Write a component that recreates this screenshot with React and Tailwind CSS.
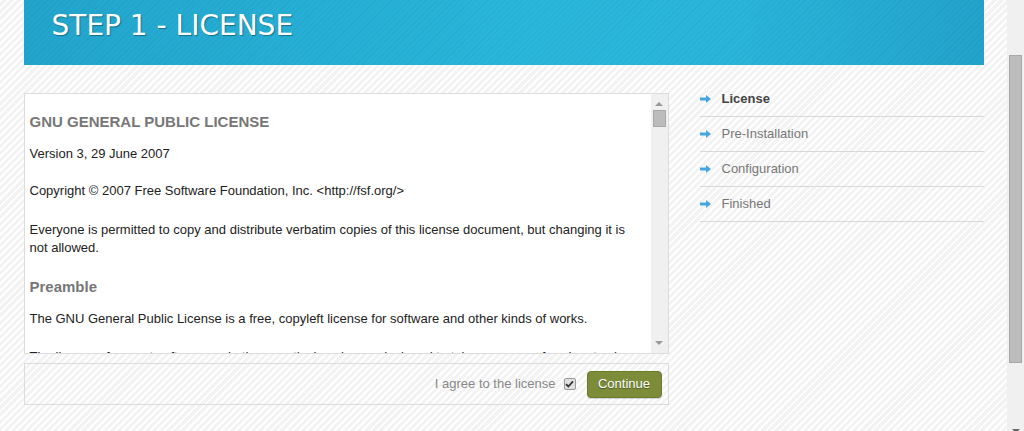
import React from "react";

const Arrow = () => (
  <svg width="11" height="8" viewBox="0 0 11 8" className="shrink-0">
    <path d="M0 2.5 H6 V0 L11 4 L6 8 V5.5 H0 Z" fill="#45a7de" />
  </svg>
);

const steps = [
  { label: "License", active: true },
  { label: "Pre-Installation" },
  { label: "Configuration" },
  { label: "Finished" },
];

export default function App() {
  return (
    <div className="flex h-[431px] w-[1024px] overflow-hidden font-['Liberation_Sans',Arial,sans-serif] text-[13px]">
      <div className="flex-1 bg-[#f6f6f6] bg-[image:repeating-linear-gradient(135deg,#ffffff_0px,#ffffff_2px,#f3f3f3_2px,#f3f3f3_5px)]">
        <div className="mx-auto w-[960px]">
          {/* header */}
          <div className="h-[65px] bg-[#27afd6] bg-[image:repeating-linear-gradient(135deg,rgba(0,0,0,0.035)_0px,rgba(0,0,0,0.035)_1px,transparent_1px,transparent_4px),linear-gradient(90deg,#22a5cc_0%,#2ab6db_55%,#2ab4da_75%,#22a3cb_100%)] pl-[28px] pt-[9px]">
            <h1 className="font-['DejaVu_Sans',Verdana,sans-serif] text-[28px] leading-[34px] text-white [text-shadow:1px_1px_1px_rgba(0,0,0,0.35)]">
              STEP 1 - LICENSE
            </h1>
          </div>

          <div className="flex gap-[31px]">
            {/* left column */}
            <div className="w-[645px] pt-[28px]">
              <div className="flex h-[261px] border border-[#dcdcdc] bg-white">
                <div className="flex-1 overflow-hidden pl-[5px] pr-[10px] text-[#222]">
                  <h2 className="mt-[18px] text-[15px] font-bold leading-[20px] text-[#777]">
                    GNU GENERAL PUBLIC LICENSE
                  </h2>
                  <p className="mt-[13px] leading-[18px]">Version 3, 29 June 2007</p>
                  <p className="mt-[19px] leading-[18px]">
                    Copyright © 2007 Free Software Foundation, Inc. &lt;http://fsf.org/&gt;
                  </p>
                  <p className="mt-[21px] leading-[18px]">
                    Everyone is permitted to copy and distribute verbatim copies of this license document, but changing it is not allowed.
                  </p>
                  <h3 className="mt-[20px] text-[15px] font-bold leading-[20px] text-[#777]">Preamble</h3>
                  <p className="mt-[13px] leading-[18px]">
                    The GNU General Public License is a free, copyleft license for software and other kinds of works.
                  </p>
                  <p className="mt-[20px] leading-[18px]">
                    The licenses for most software and other practical works are designed to take away your freedom to share and change the works. By contrast, the GNU General Public License is intended to guarantee your freedom.
                  </p>
                </div>
                <div className="flex w-[17px] flex-col items-center bg-[#f0f0f0]">
                  <div className="mt-[8px] h-0 w-0 border-x-[4px] border-b-[4px] border-x-transparent border-b-[#999]" />
                  <div className="mt-[4px] h-[17px] w-[13px] border border-[#a8a8a8] bg-[#bcbcbc]" />
                  <div className="flex-1" />
                  <div className="mb-[8px] h-0 w-0 border-x-[4px] border-t-[4px] border-x-transparent border-t-[#999]" />
                </div>
              </div>

              <div className="mt-[9px] flex h-[42px] items-center justify-end border border-[#dcdcdc] pr-[6px]">
                <span className="text-[#888]">I agree to the license</span>
                <span className="ml-[8px] flex h-[12px] w-[12px] items-center justify-center rounded-[2px] border border-[#999] bg-[#e0e0e0]">
                  <svg width="9" height="8" viewBox="0 0 9 8">
                    <path d="M1 4.2 L3.3 6.5 L8 1.3" stroke="#333" strokeWidth="1.8" fill="none" />
                  </svg>
                </span>
                <button className="ml-[11px] h-[27px] w-[75px] rounded-[4px] border border-[#6b7a2b] bg-[#7c8c38] text-[13px] text-white [text-shadow:0_1px_1px_rgba(0,0,0,0.4)] shadow-[0_1px_1px_rgba(0,0,0,0.15)]">
                  Continue
                </button>
              </div>
            </div>

            {/* sidebar */}
            <div className="w-[284px] pt-[17px]">
              {steps.map((s) => (
                <div
                  key={s.label}
                  className="flex h-[35px] items-center gap-[11px] border-b border-[#d8d8d8] pb-[1px]"
                >
                  <Arrow />
                  <span className={s.active ? "font-bold text-[#444]" : "text-[#777]"}>{s.label}</span>
                </div>
              ))}
            </div>
          </div>
        </div>
      </div>

      {/* page scrollbar */}
      <div className="flex w-[17px] flex-col items-center bg-[#f0f0f0]">
        <div className="mt-[55px] h-[308px] w-[13px] border border-[#a8a8a8] bg-[#bcbcbc]" />
        <div className="flex-1" />
        <div className="mb-[-2px] h-0 w-0 border-x-[4px] border-t-[4px] border-x-transparent border-t-[#666]" />
      </div>
    </div>
  );
}
